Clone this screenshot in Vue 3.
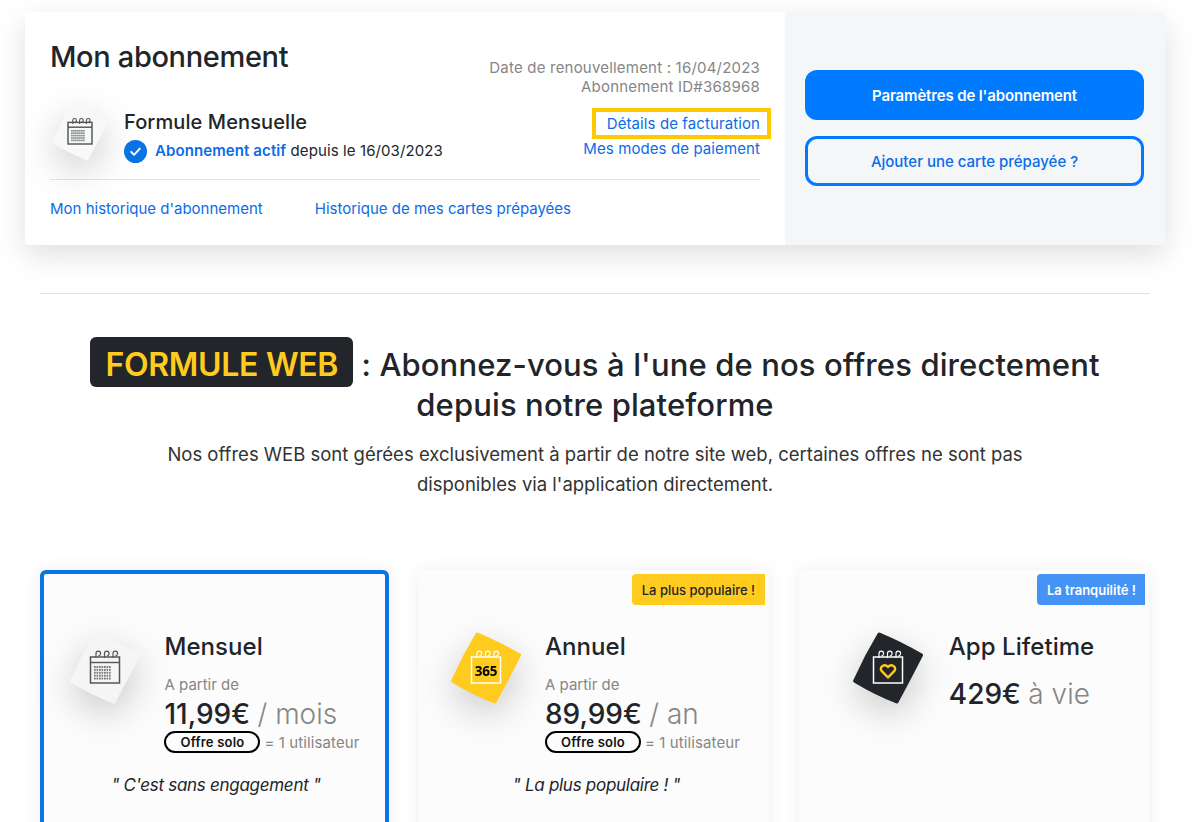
<script setup>
const plans = [
  { id: 'm', title: 'Mensuel', from: true, price: '11,99€', unit: '/ mois', quote: '" C\'est sans engagement "', tone: 'light', active: true },
  { id: 'a', title: 'Annuel', from: true, price: '89,99€', unit: '/ an', quote: '" La plus populaire ! "', tone: 'yellow', badge: 'La plus populaire !', badgeClass: 'badge-yellow' },
  { id: 'l', title: 'App Lifetime', from: false, price: '429€', unit: 'à vie', tone: 'dark', badge: 'La tranquilité !', badgeClass: 'badge-blue' }
]
const gridRows = [0, 1, 2, 3, 4]
const gridCols = [0, 1, 2, 3, 4, 5, 6]
const shape = 'M29.6 5.4 Q30.6 4.2 32 4.8 Q52 13 74 25.6 Q75.6 26.6 74.8 28 Q63 51 50.4 74.6 Q49.6 76 48 75.2 Q27 67 6 54.4 Q4.6 53.4 5.4 52 Q16 28 29.6 5.4 Z'
const rings = 'M31 30v-4.500a2.300 2.300 0 1 1 2.300 2.300M39.500 30v-4.500a2.300 2.300 0 1 1 2.300 2.300M48 30v-4.500a2.300 2.300 0 1 1 2.300 2.300'
</script>

<template>
  <div class="page">
    <section class="sub-card">
      <div class="sub-main">
        <div class="sub-head">
          <div class="sub-left">
            <h1 class="sub-title">Mon abonnement</h1>
            <div class="formula">
              <svg class="tile tile-small" viewBox="0 0 80 80" aria-hidden="true">
                <path :d="shape" fill="#f7f8f8" />
                <g fill="none" stroke="#555" stroke-width="1.800">
                  <rect x="25" y="28" width="30" height="27" />
                  <path d="M25 34h30" />
                  <path :d="rings" stroke-width="1.400" />
                </g>
                <g fill="#777">
                  <template v-for="r in gridRows" :key="r">
                    <rect v-for="c in gridCols" :key="c" :x="29 + c * 2.500" :y="37.500 + r * 3" width="1.800" height="2" />
                  </template>
                </g>
              </svg>
              <div class="formula-text">
                <div class="formula-name">Formule Mensuelle</div>
                <div class="formula-status">
                  <svg class="check" viewBox="0 0 24 24" aria-hidden="true">
                    <circle cx="12" cy="12" r="12" fill="#0a74e6" />
                    <path d="M7.500 12.500l3 3 6-6.500" fill="none" stroke="#fff" stroke-width="2" stroke-linecap="round" stroke-linejoin="round" />
                  </svg>
                  <span class="status-text"><span class="status-active">Abonnement actif</span> depuis le 16/03/2023</span>
                </div>
              </div>
            </div>
          </div>
          <div class="sub-right">
            <div class="meta">Date de renouvellement : 16/04/2023</div>
            <div class="meta">Abonnement ID#368968</div>
            <a class="link highlight">Détails de facturation</a>
            <a class="link pay">Mes modes de paiement</a>
          </div>
        </div>
        <div class="sub-links">
          <a class="link">Mon historique d'abonnement</a>
          <a class="link">Historique de mes cartes prépayées</a>
        </div>
      </div>
      <aside class="sub-side">
        <button class="btn btn-fill">Paramètres de l'abonnement</button>
        <button class="btn btn-line">Ajouter une carte prépayée ?</button>
      </aside>
    </section>

    <hr class="divider" />

    <section class="intro">
      <h2 class="intro-title"><span class="intro-tag">FORMULE WEB</span> : Abonnez-vous à l'une de nos offres directement depuis notre plateforme</h2>
      <p class="intro-text">Nos offres WEB sont gérées exclusivement à partir de notre site web, certaines offres ne sont pas disponibles via l'application directement.</p>
    </section>

    <section class="plans">
      <article v-for="p in plans" :key="p.id" class="plan" :class="{ 'plan-active': p.active }">
        <span v-if="p.badge" class="badge" :class="p.badgeClass">{{ p.badge }}</span>
        <div class="plan-body" :class="{ 'plan-body-wide': !p.from }">
          <svg class="tile plan-tile" viewBox="0 0 80 80" aria-hidden="true">
            <path :d="shape" :fill="p.tone === 'yellow' ? '#ffcb1f' : p.tone === 'dark' ? '#22252a' : '#f4f5f5'" />
            <g fill="none" :stroke="p.tone === 'light' ? '#555' : '#fff'" stroke-width="1.500">
              <rect x="25.500" y="29" width="29" height="26" />
              <path :d="rings" stroke-width="1.200" />
            </g>
            <g v-if="p.tone === 'light'">
              <path d="M25.500 34.500h29" stroke="#555" stroke-width="1.400" />
              <g fill="#777">
                <template v-for="r in gridRows" :key="r">
                  <rect v-for="c in gridCols" :key="c" :x="29 + c * 2.500" :y="38 + r * 2.900" width="1.700" height="1.900" />
                </template>
              </g>
            </g>
            <text v-if="p.tone === 'yellow'" x="40" y="47.500" text-anchor="middle" class="tile-365">365</text>
            <path v-if="p.tone === 'dark'" d="M40 49.500L33.800 43.200C30.500 39.500 36.500 34.800 40 39C43.500 34.800 49.500 39.500 46.200 43.200Z" fill="none" stroke="#ffcb1f" stroke-width="2.400" stroke-linejoin="round" />
          </svg>
          <div class="plan-info">
            <h3 class="plan-title">{{ p.title }}</h3>
            <div v-if="p.from" class="plan-from">A partir de</div>
            <div class="plan-price">{{ p.price }} <span class="plan-unit">{{ p.unit }}</span></div>
            <div v-if="p.from" class="plan-seat"><span class="pill">Offre solo</span> <span class="seat-text">= 1 utilisateur</span></div>
          </div>
        </div>
        <p v-if="p.quote" class="plan-quote">{{ p.quote }}</p>
      </article>
    </section>
  </div>
</template>

<style>
html, body { background: #fff; }
</style>

<style scoped>
.page {
  box-sizing: border-box;
  height: 822px;
  overflow: hidden;
  padding: 12px 29px 0 25px;
  font-family: Inter, "Liberation Sans", sans-serif;
  color: #212529;
}
.sub-card {
  display: flex;
  height: 233px;
  border-radius: 4px;
  background: #fff;
  box-shadow: 0 10px 30px rgba(0, 0, 0, 0.13);
  overflow: hidden;
}
.sub-main {
  flex: 1;
  padding: 28px 25px 0;
}
.sub-head {
  display: flex;
  justify-content: space-between;
  height: 139px;
  border-bottom: 1px solid #e2e3e5;
}
.sub-title {
  margin: 0;
  font-size: 29px;
  line-height: 34px;
  font-weight: 500;
  letter-spacing: -0.35px;
}
.formula {
  display: flex;
  align-items: flex-start;
  margin-top: 35px;
}
.tile {
  width: 80px;
  height: 80px;
  flex: none;
  overflow: visible;
  filter: drop-shadow(0 12px 18px rgba(0, 0, 0, 0.2));
}
.plan-tile {
  margin-top: -2px;
}
.tile-small {
  width: 64px;
  height: 64px;
  margin: -9px 12px 0 -2px;
}
.tile-365 {
  font-family: "Open Sans", sans-serif;
  font-size: 13.500px;
  font-weight: 700;
  letter-spacing: -0.3px;
  fill: #000;
}
.formula-name {
  font-size: 20px;
  line-height: 26px;
  font-weight: 500;
  letter-spacing: 0.1px;
}
.formula-status {
  display: flex;
  align-items: center;
  gap: 8px;
  margin-top: 5px;
  font-size: 15px;
  letter-spacing: 0.1px;
}
.status-text {
  margin-bottom: 2px;
}
.check {
  width: 23px;
  height: 23px;
}
.status-active {
  color: #0a6ce8;
  font-weight: 600;
}
.sub-right {
  display: flex;
  flex-direction: column;
  align-items: flex-end;
  padding-top: 18px;
}
.meta {
  font-size: 15px;
  line-height: 19px;
  color: #868686;
  letter-spacing: 0.2px;
}
.link {
  font-size: 15px;
  line-height: 19px;
  color: #0a6ce8;
}
.highlight {
  margin: 12px -11px 0 0;
  padding: 2px 7px 2px 11px;
  border: 4px solid #ffc800;
  letter-spacing: 0.1px;
}
.pay {
  letter-spacing: 0.1px;
}
.sub-links {
  display: flex;
  gap: 52px;
  margin-top: 19px;
}
.sub-side {
  width: 380px;
  flex: none;
  box-sizing: border-box;
  padding: 0 21px 2px 20px;
  background: #f4f6f8;
  display: flex;
  flex-direction: column;
  justify-content: center;
  gap: 16px;
}
.btn {
  height: 50px;
  padding: 2px 0 0;
  border-radius: 12px;
  font-family: inherit;
  font-size: 15px;
  font-weight: 600;
  letter-spacing: -0.15px;
}
.btn-fill {
  border: 0;
  background: #007bff;
  color: #fff;
}
.btn-line {
  border: 3px solid #007bff;
  background: #f4f6f8;
  color: #0a6ce8;
  font-weight: 500;
  letter-spacing: 0;
}
.divider {
  margin: 48px 15px 0;
  border: 0;
  border-top: 1px solid #e2e3e5;
}
.intro {
  text-align: center;
  margin-top: 43px;
}
.intro-title {
  margin: 0 auto;
  width: 1020px;
  font-size: 31px;
  line-height: 40px;
  font-weight: 500;
  letter-spacing: 0.12px;
}
.intro-tag {
  display: inline-block;
  height: 50px;
  line-height: 55px;
  margin-bottom: -2px;
  padding: 0 15px;
  box-sizing: border-box;
  border-radius: 6px;
  background: #22252a;
  color: #ffcb1f;
  font-size: 32px;
  font-weight: 600;
  letter-spacing: -0.3px;
}
.intro-text {
  margin: 14px auto 0;
  width: 890px;
  font-size: 18.500px;
  line-height: 30px;
  color: #333;
}
.plans {
  display: grid;
  grid-template-columns: 349px 350px 350px;
  gap: 30px;
  margin: 71px 0 0 15px;
}
.plan {
  position: relative;
  box-sizing: border-box;
  height: 300px;
  padding: 4px 4px 4px 6px;
  border-radius: 6px;
  background: #fcfcfc;
  box-shadow: 0 0 18px rgba(0, 0, 0, 0.07);
}
.plan-active {
  border: 4px solid #0a74e6;
  padding: 0;
}
.badge {
  position: absolute;
  top: 4px;
  right: 4px;
  height: 31px;
  line-height: 33px;
  padding: 0 10px;
  border-radius: 4px 0 0 4px;
  font-size: 13px;
  font-weight: 500;
}
.badge-yellow {
  background: #ffcb1f;
  color: #212529;
}
.badge-blue {
  padding-right: 9px;
  background: #4394f5;
  color: #fff;
  font-weight: 600;
}
.plan-body {
  display: flex;
  justify-content: center;
  align-items: flex-start;
  gap: 19px;
  padding: 56px 4px 0 0;
}
.plan-body-wide {
  gap: 21px;
  padding-right: 8px;
}
.plan-title {
  margin: 0;
  font-size: 24px;
  line-height: 34px;
  font-weight: 500;
  letter-spacing: 0.05px;
}
.plan-from {
  margin-top: 11px;
  font-size: 15px;
  line-height: 20px;
  color: #868686;
}
.plan-from + .plan-price {
  margin-top: 1px;
}
.plan-price {
  font-size: 28px;
  line-height: 36px;
  font-weight: 500;
}
.plan-unit {
  color: #868686;
  font-weight: 300;
}
.plan-title + .plan-price {
  margin-top: 12px;
}
.plan-seat {
  display: flex;
  align-items: center;
  gap: 4px;
  margin-top: -2px;
  font-size: 15px;
  line-height: 22px;
  color: #868686;
  letter-spacing: 0.1px;
  white-space: nowrap;
}
.seat-text {
  margin-top: 2px;
}
.pill {
  box-sizing: border-box;
  width: 96px;
  height: 22px;
  line-height: 19px;
  border: 2px solid #000;
  border-radius: 11px;
  text-align: center;
  color: #111;
  font-size: 13px;
  font-weight: 600;
  letter-spacing: 0.2px;
}
.plan-quote {
  margin: 19px 0 0;
  padding-left: 3px;
  text-align: center;
  font-size: 17px;
  line-height: 24px;
  font-style: italic;
  letter-spacing: -0.28px;
}
</style>
